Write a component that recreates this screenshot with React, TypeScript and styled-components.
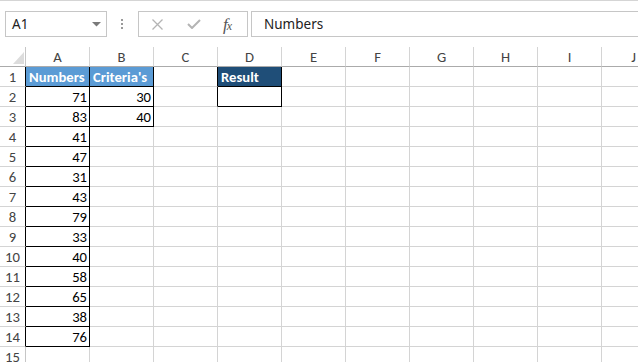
import React from "react";
import styled, { createGlobalStyle } from "styled-components";

const GlobalStyle = createGlobalStyle`
  html, body { margin: 0; padding: 0; background: #ffffff; overflow: hidden; }
  * { box-sizing: border-box; }
`;

const CELL_FONT = `"Carlito", "Lato", "Liberation Sans", sans-serif`;
const UI_FONT = `"Segoe UI", "Noto Sans", "Open Sans", sans-serif`;
const GRID = "#d4d4d4";
const INK = "#000000";

const Page = styled.div`
  width: 638px;
  height: 362px;
  overflow: hidden;
  display: flex;
  flex-direction: column;
  border-top: 1px solid #d5d5d5;
  background: #fff;
  & > * { flex-shrink: 0; }
`;

const FormulaBar = styled.div`
  display: flex;
  align-items: stretch;
  height: 26px;
  margin-top: 10px;
  margin-bottom: 10px;
  padding-left: 5px;
`;

const NameBox = styled.div`
  width: 102px;
  border: 1px solid #c6c6c6;
  display: flex;
  align-items: center;
  justify-content: space-between;
  padding: 0 5px 0 6px;
  font-family: ${UI_FONT};
  font-size: 13.5px;
  color: #222;
`;

const Grip = styled.div`
  width: 31px;
  display: flex;
  flex-direction: column;
  align-items: center;
  justify-content: center;
  gap: 2px;
  padding-right: 1px;
`;

const GripDot = styled.span`
  width: 2px;
  height: 2px;
  background: #9a9a9a;
`;

const FxButtons = styled.div`
  width: 110px;
  border: 1px solid #c6c6c6;
  display: flex;
  align-items: center;
  padding-left: 12px;
`;

const IconSlot = styled.span<{ $w: number }>`
  width: ${(p) => p.$w}px;
  display: flex;
  align-items: center;
  justify-content: flex-start;
`;

const FxText = styled.span`
  font-family: "Liberation Serif", "DejaVu Serif", serif;
  font-style: italic;
  font-size: 17px;
  color: #555;
  letter-spacing: -1px;
  line-height: 1;
  & > small {
    font-size: 12px;
  }
`;

const FormulaInput = styled.div`
  flex: 1;
  margin-left: 3px;
  border: 1px solid #c6c6c6;
  border-right: none;
  display: flex;
  align-items: center;
  padding-left: 12px;
  font-family: ${UI_FONT};
  font-size: 13.5px;
  color: #222;
`;

const Sheet = styled.div`
  display: grid;
  grid-template-columns: 26px repeat(10, 64px);
  grid-auto-rows: 20px;
  font-family: ${CELL_FONT};
  font-size: 14.67px;
`;

const Corner = styled.div`
  border-right: 1px solid #c6c6c6;
  border-bottom: 1px solid #ababab;
  display: flex;
  align-items: flex-end;
  justify-content: flex-end;
  padding: 0 1px 2px 0;
`;

const ColHead = styled.div`
  border-right: 1px solid ${GRID};
  border-bottom: 1px solid #ababab;
  display: flex;
  align-items: center;
  justify-content: center;
  color: #444;
  padding-top: 1px;
`;

const RowHead = styled.div<{ $edge: string }>`
  border-right: 1px solid ${(p) => p.$edge};
  border-bottom: 1px solid ${GRID};
  display: flex;
  align-items: center;
  justify-content: center;
  color: #444;
  padding-top: 1px;
`;

const Cell = styled.div<{
  $fill: string;
  $right: string;
  $bottom: string;
  $bold: boolean;
  $align: "left" | "right";
}>`
  background: ${(p) => p.$fill};
  border-right: 1px solid ${(p) => p.$right};
  border-bottom: 1px solid ${(p) => p.$bottom};
  display: flex;
  align-items: center;
  justify-content: ${(p) => (p.$align === "right" ? "flex-end" : "flex-start")};
  padding: 1px 2px 0 3px;
  font-weight: ${(p) => (p.$bold ? 700 : 400)};
  color: ${(p) => (p.$bold ? "#ffffff" : "#000000")};
  white-space: nowrap;
  overflow: hidden;
`;

const COLS = ["A", "B", "C", "D", "E", "F", "G", "H", "I", "J"];
const ROWS = 15;

type CellData = { v: string | number; fill?: string; bold?: boolean };

const data: Record<string, CellData> = {};
const numbers = [71, 83, 41, 47, 31, 43, 79, 33, 40, 58, 65, 38, 76];
data["A1"] = { v: "Numbers", fill: "#5b9bd5", bold: true };
numbers.forEach((n, i) => (data[`A${i + 2}`] = { v: n }));
data["B1"] = { v: "Criteria's", fill: "#5b9bd5", bold: true };
data["B2"] = { v: 30 };
data["B3"] = { v: 40 };
data["D1"] = { v: "Result", fill: "#1f4e78", bold: true };
data["D2"] = { v: "" };

const isBordered = (r: number, c: number) => {
  if (c < 0 || c >= COLS.length || r < 1) return false;
  return `${COLS[c]}${r}` in data;
};

const CloseIcon = () => (
  <svg width="13" height="11" viewBox="0 0 13 11">
    <path d="M1.5 0.5 L11.5 10.5 M11.5 0.5 L1.5 10.5" stroke="#b4b4b4" strokeWidth="1.3" fill="none" />
  </svg>
);

const CheckIcon = () => (
  <svg width="14" height="10" viewBox="0 0 14 10">
    <path d="M1 5 L5 9 L13 1" stroke="#b4b4b4" strokeWidth="2" fill="none" />
  </svg>
);

const DropArrow = () => (
  <svg width="9" height="5" viewBox="0 0 9 5">
    <path d="M0 0 H9 L4.5 4.5 Z" fill="#7a7a7a" />
  </svg>
);

const CornerTriangle = () => (
  <svg width="11" height="12" viewBox="0 0 11 12">
    <path d="M11 0 V12 H0 Z" fill="#dcdcdc" />
  </svg>
);

export default function App() {
  const cells: React.ReactNode[] = [];
  cells.push(
    <Corner key="corner">
      <CornerTriangle />
    </Corner>
  );
  COLS.forEach((c) => cells.push(<ColHead key={`h${c}`}>{c}</ColHead>));
  for (let r = 1; r <= ROWS; r++) {
    cells.push(
      <RowHead key={`r${r}`} $edge={isBordered(r, 0) ? INK : "#c6c6c6"}>
        {r}
      </RowHead>
    );
    COLS.forEach((c, ci) => {
      const d = data[`${c}${r}`];
      const right = isBordered(r, ci) || isBordered(r, ci + 1) ? INK : GRID;
      const bottom = isBordered(r, ci) || isBordered(r + 1, ci) ? INK : GRID;
      const isNum = d && typeof d.v === "number";
      cells.push(
        <Cell
          key={`${c}${r}`}
          $fill={d?.fill ?? "transparent"}
          $right={right}
          $bottom={bottom}
          $bold={!!d?.bold}
          $align={isNum ? "right" : "left"}
        >
          {d ? d.v : ""}
        </Cell>
      );
    });
  }

  return (
    <>
      <GlobalStyle />
      <Page>
        <FormulaBar>
          <NameBox>
            <span>A1</span>
            <DropArrow />
          </NameBox>
          <Grip>
            <GripDot />
            <GripDot />
            <GripDot />
          </Grip>
          <FxButtons>
            <IconSlot $w={36}>
              <CloseIcon />
            </IconSlot>
            <IconSlot $w={36}>
              <CheckIcon />
            </IconSlot>
            <IconSlot $w={20}>
              <FxText>
                f<small>x</small>
              </FxText>
            </IconSlot>
          </FxButtons>
          <FormulaInput>Numbers</FormulaInput>
        </FormulaBar>
        <Sheet>{cells}</Sheet>
      </Page>
    </>
  );
}
